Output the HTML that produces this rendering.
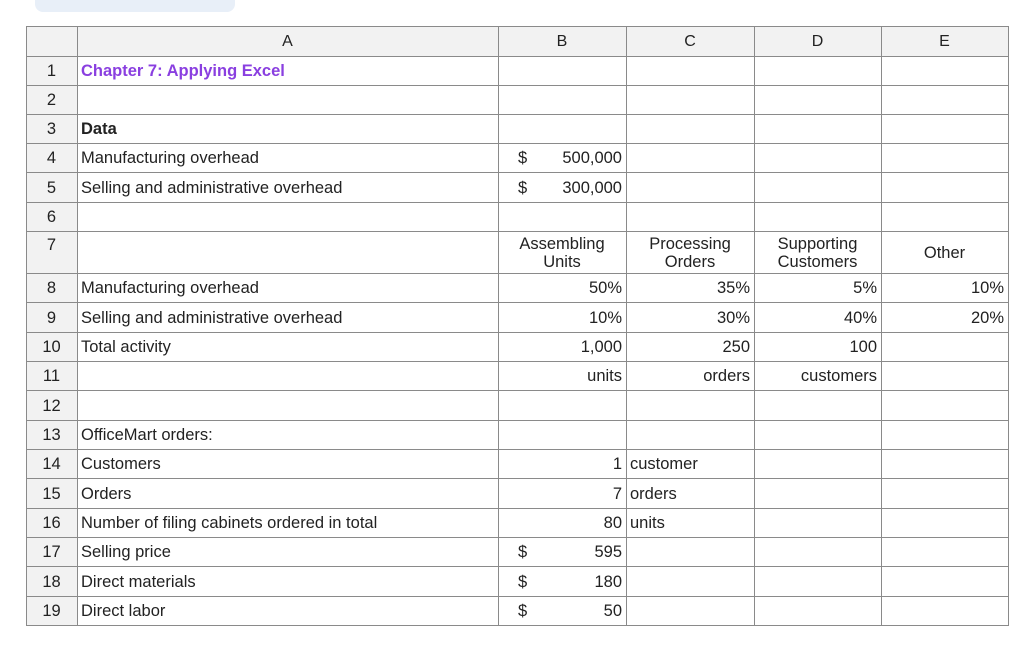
<!DOCTYPE html>
<html><head><meta charset="utf-8"><style>
body{margin:0;width:1024px;height:648px;background:#fff;font-family:"Liberation Sans",Arial,sans-serif;overflow:hidden;position:relative}
.btn{position:absolute;left:35px;top:-20px;width:200px;height:32px;background:#e8eff8;border-radius:8px}
table{position:absolute;left:26px;top:26px;border-collapse:collapse;table-layout:fixed;font-size:16.5px;color:#222}
td{border:1px solid #8a8a8a;padding:0 4px 0 3px;white-space:nowrap;overflow:hidden;line-height:18px}
tr.h td{background:#f2f2f2;text-align:center;height:29px;font-size:16px}
td.n{background:#f2f2f2;text-align:center;font-size:16.5px}
td.r{text-align:right}
td.c{text-align:center}
.d{float:left;padding-left:16px}
</style></head><body>
<div class="btn"></div>
<table>
<colgroup><col style="width:51px"><col style="width:421px"><col style="width:128px"><col style="width:128px"><col style="width:127px"><col style="width:127px"></colgroup>
<tr class="h"><td></td><td>A</td><td>B</td><td>C</td><td>D</td><td>E</td></tr>
<tr style="height:29px"><td class="n">1</td><td style="color:#8a3fe0;font-weight:bold">Chapter 7: Applying Excel</td><td></td><td></td><td></td><td></td></tr>
<tr style="height:29px"><td class="n">2</td><td></td><td></td><td></td><td></td><td></td></tr>
<tr style="height:29px"><td class="n">3</td><td style="font-weight:bold">Data</td><td></td><td></td><td></td><td></td></tr>
<tr style="height:29px"><td class="n">4</td><td>Manufacturing overhead</td><td class="r"><span class="d">$</span>500,000</td><td></td><td></td><td></td></tr>
<tr style="height:30px"><td class="n">5</td><td>Selling and administrative overhead</td><td class="r"><span class="d">$</span>300,000</td><td></td><td></td><td></td></tr>
<tr style="height:29px"><td class="n">6</td><td></td><td></td><td></td><td></td><td></td></tr>
<tr style="height:42px"><td class="n" style="vertical-align:top;padding-top:4px">7</td><td></td><td class="c">Assembling<br>Units</td><td class="c">Processing<br>Orders</td><td class="c">Supporting<br>Customers</td><td class="c">Other</td></tr>
<tr style="height:29px"><td class="n">8</td><td>Manufacturing overhead</td><td class="r">50%</td><td class="r">35%</td><td class="r">5%</td><td class="r">10%</td></tr>
<tr style="height:30px"><td class="n">9</td><td>Selling and administrative overhead</td><td class="r">10%</td><td class="r">30%</td><td class="r">40%</td><td class="r">20%</td></tr>
<tr style="height:29px"><td class="n">10</td><td>Total activity</td><td class="r">1,000</td><td class="r">250</td><td class="r">100</td><td></td></tr>
<tr style="height:29px"><td class="n">11</td><td></td><td class="r">units</td><td class="r">orders</td><td class="r">customers</td><td></td></tr>
<tr style="height:30px"><td class="n">12</td><td></td><td></td><td></td><td></td><td></td></tr>
<tr style="height:29px"><td class="n">13</td><td>OfficeMart orders:</td><td></td><td></td><td></td><td></td></tr>
<tr style="height:29px"><td class="n">14</td><td>Customers</td><td class="r">1</td><td>customer</td><td></td><td></td></tr>
<tr style="height:30px"><td class="n">15</td><td>Orders</td><td class="r">7</td><td>orders</td><td></td><td></td></tr>
<tr style="height:29px"><td class="n">16</td><td>Number of filing cabinets ordered in total</td><td class="r">80</td><td>units</td><td></td><td></td></tr>
<tr style="height:29px"><td class="n">17</td><td>Selling price</td><td class="r"><span class="d">$</span>595</td><td></td><td></td><td></td></tr>
<tr style="height:30px"><td class="n">18</td><td>Direct materials</td><td class="r"><span class="d">$</span>180</td><td></td><td></td><td></td></tr>
<tr style="height:29px"><td class="n">19</td><td>Direct labor</td><td class="r"><span class="d">$</span>50</td><td></td><td></td><td></td></tr>
</table>
</body></html>
